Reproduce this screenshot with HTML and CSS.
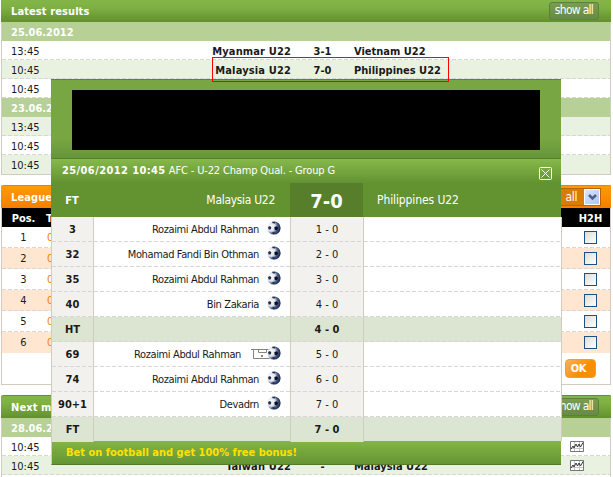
FILE: index.html
```
<!DOCTYPE html>
<html lang="en">
<head>
    <meta charset="UTF-8">
    <title>Latest results</title>
    <link rel="stylesheet" href="styles.css">
</head>
<body>
    <svg width="0" height="0" class="defs">
        <defs>
            <radialGradient id="ballFill" cx="0.25" cy="0.4" r="0.75">
                <stop offset="0" stop-color="#ffffff"/>
                <stop offset="0.45" stop-color="#dfe2ea"/>
                <stop offset="0.7" stop-color="#4a5f8e"/>
                <stop offset="1" stop-color="#14254b"/>
            </radialGradient>
            <symbol id="ball" viewBox="0 0 14 14">
                <circle cx="7" cy="7" r="6.6" fill="url(#ballFill)"/>
                <path d="M1 6l2-1 1.400 1.400-.8 2H1.600z" fill="#26304a"/>
                <path d="M7.400 6l2.400-.8 1.400 1.800-1.200 2.200-2.400-.4z" fill="#0d1220"/>
                <path d="M5 .8L8.600 .7 7.800 2.400 5.600 2.300zM4.600 11.800l2.200-.8 1.600 1.200-1.400 1.200z" fill="#26304a"/>
            </symbol>
            <symbol id="goal" viewBox="0 0 20 11">
                <path d="M0 .5h20M2.500 .5v9h16M7.500 .5v3h8v-3" fill="none" stroke="#85857f"/>
                <path d="M10 6h2v2h-2z" fill="#85857f"/>
            </symbol>
            <symbol id="chart" viewBox="0 0 14 11">
                <path d="M.5 .5h13v10H.5zM4.500 1v9M9.500 1v9M1 7.500h12" fill="#fff" stroke="#c4c4c4"/>
                <path d="M.5 .5h13v10H.5z" fill="none" stroke="#77777a"/>
                <path d="M1 8l2-3 1 2 2-4 1.500 3L9 3l1.500 3L13 1.500" fill="none" stroke="#333"/>
            </symbol>
        </defs>
    </svg>

    <div class="page">
        <div class="panel results">
            <div class="panel-head">Latest results<a class="show-all">show all</a></div>
            <div class="date">25.06.2012</div>
            <div class="match"><span>13:45</span><b class="home">Myanmar U22</b><b class="score">3-1</b><b>Vietnam U22</b></div>
            <div class="match alt marked"><span>10:45</span><b class="home">Malaysia U22</b><b class="score">7-0</b><b>Philippines U22</b></div>
            <div class="match"><span>10:45</span></div>
            <div class="date">23.06.2012</div>
            <div class="match alt"><span>13:45</span></div>
            <div class="match"><span>10:45</span></div>
            <div class="match alt last"><span>10:45</span></div>
        </div>

        <div class="panel league">
            <div class="panel-head">League<span class="select">all<i><svg width="9" height="7" viewBox="0 0 9 7"><path d="M1 1l3.500 3.500L8 1" fill="none" stroke="#4d6185" stroke-width="2.600"/></svg></i></span></div>
            <div class="league-row league-title"><span>Pos.</span><span>T</span><span class="h2h">H2H</span></div>
            <div class="league-row"><span>1</span><a>0</a><i class="check"></i></div>
            <div class="league-row peach"><span>2</span><a>0</a><i class="check"></i></div>
            <div class="league-row"><span>3</span><a>0</a><i class="check"></i></div>
            <div class="league-row peach"><span>4</span><a>0</a><i class="check"></i></div>
            <div class="league-row"><span>5</span><a>0</a><i class="check"></i></div>
            <div class="league-row peach last"><span>6</span><a>0</a><i class="check"></i></div>
            <div class="league-foot"><button class="ok">OK</button></div>
        </div>

        <div class="panel next">
            <div class="panel-head">Next matches<a class="show-all">show all</a></div>
            <div class="date">28.06.2012</div>
            <div class="match"><span>10:45</span><svg class="chart"><use href="#chart"/></svg></div>
            <div class="match alt"><span>10:45</span><b class="home">Taiwan U22</b><b class="score">-</b><b>Malaysia U22</b><svg class="chart"><use href="#chart"/></svg></div>
            <div class="match"></div>
        </div>
    </div>

    <div class="popup">
        <div class="banner"><div class="ad"></div></div>
        <div class="popup-head">
            <div><b>25/06/2012 10:45</b> <span>AFC - U-22 Champ Qual. - Group G</span></div>
            <svg class="close" width="13" height="13" viewBox="0 0 13 13"><rect x=".5" y=".5" width="12" height="12" rx="1" fill="none" stroke="#fff"/><path d="M2.500 2.500l8 8M10.500 2.500l-8 8" stroke="#fff"/></svg>
        </div>
        <div class="teams"><b>FT</b><span class="player">Malaysia U22</span><b class="total">7-0</b><span class="away">Philippines U22</span></div>
        <div class="events">
            <div class="event"><b>3</b><span class="player">Rozaimi Abdul Rahman<svg class="ball"><use href="#ball"/></svg></span><span>1 - 0</span></div>
            <div class="event"><b>32</b><span class="player">Mohamad Fandi Bin Othman<svg class="ball"><use href="#ball"/></svg></span><span>2 - 0</span></div>
            <div class="event"><b>35</b><span class="player">Rozaimi Abdul Rahman<svg class="ball"><use href="#ball"/></svg></span><span>3 - 0</span></div>
            <div class="event"><b>40</b><span class="player">Bin Zakaria<svg class="ball"><use href="#ball"/></svg></span><span>4 - 0</span></div>
            <div class="event half"><b>HT</b><span class="player"></span><b>4 - 0</b></div>
            <div class="event"><b>69</b><span class="player">Rozaimi Abdul Rahman<svg class="goal"><use href="#goal"/></svg><svg class="ball"><use href="#ball"/></svg></span><span>5 - 0</span></div>
            <div class="event"><b>74</b><span class="player">Rozaimi Abdul Rahman<svg class="ball"><use href="#ball"/></svg></span><span>6 - 0</span></div>
            <div class="event"><b>90+1</b><span class="player">Devadrn<svg class="ball"><use href="#ball"/></svg></span><span>7 - 0</span></div>
            <div class="event half"><b>FT</b><span class="player"></span><b>7 - 0</b></div>
        </div>
        <div class="bonus">Bet on football and get 100% free bonus!</div>
    </div>
</body>
</html>
```
FILE: styles.css
```
* {
    box-sizing: border-box;
}

body {
    margin: 0;
    height: 477px;
    overflow: hidden;
    position: relative;
    background: #fff;
    color: #1a1a1a;
    font-family: Tahoma, "DejaVu Sans Condensed", "DejaVu Sans", sans-serif;
    font-stretch: condensed;
    font-size: 11px;
}

.defs {
    position: absolute;
}

.page {
    height: 477px;
    overflow: hidden;
    padding-left: 1px;
    width: 611px;
}

.panel {
    border: 1px solid #d0ccc0;
    border-top: 0;
    margin-bottom: 10px;
}

.panel-head {
    height: 23px;
    margin: 0 -2px 0 -1px;
    padding: 0 0 0 10px;
    border-top: 1px solid #5f922f;
    border-radius: 3px 3px 0 0;
    background: linear-gradient(#83b548, #7eb043 35%, #629030);
    color: #fff;
    font-weight: bold;
    line-height: 23px;
    letter-spacing: 0.1px;
    display: flex;
    justify-content: space-between;
}

.results .panel-head {
    height: 22px;
    border-top: 0;
    border-radius: 0;
}

.show-all {
    width: 50px;
    height: 18px;
    margin: 2px 13px 0 0;
    border: 1px solid #5f8038;
    border-radius: 3px;
    background: linear-gradient(#7a9c55, #668b42);
    font-weight: normal;
    font-size: 12px;
    line-height: 15px;
    letter-spacing: -0.7px;
    text-align: center;
}

.date {
    height: 19px;
    padding-left: 9px;
    background: #b6d095;
    color: #fff;
    font-weight: bold;
    line-height: 21px;
}

.match {
    height: 19px;
    padding-left: 9px;
    line-height: 21px;
    display: grid;
    grid-template-columns: 100px 180px 63px 215px 15px;
    background: repeating-linear-gradient(90deg, #d6d6d6 0 4px, transparent 4px 6px) bottom / 100% 1px no-repeat #fff;
}

.match.alt {
    background-color: #e9f2e1;
}

.match.last {
    background-image: none;
}

.home {
    text-align: right;
    letter-spacing: 0.15px;
}

.score {
    text-align: center;
}

.match.marked {
    position: relative;
}

.marked::after {
    content: "";
    position: absolute;
    left: 210px;
    top: -3px;
    width: 235px;
    height: 23px;
    border: 1px solid #f00;
    z-index: 3;
}

.chart {
    grid-column: 5;
    width: 14px;
    height: 11px;
    margin: 4px 0 0 1px;
}

.league {
    height: 200px;
}

.league .panel-head {
    border-color: #f47c08;
    background: linear-gradient(#ff9a05, #f57f00);
}

.select {
    width: 60px;
    height: 18px;
    margin: 2px 11px 0 0;
    border: 1px solid #b96400;
    background: #d97b04;
    font-weight: normal;
    line-height: 17px;
    letter-spacing: -0.4px;
    font-size: 12px;
    display: flex;
    justify-content: flex-end;
    gap: 7px;
}

.select i {
    width: 16px;
    height: 16px;
    border: 1px solid #fff;
    background: linear-gradient(135deg, #dbe5fd, #aec4f4);
    display: flex;
    align-items: center;
    justify-content: center;
}

.league-row {
    height: 21px;
    line-height: 22px;
    display: grid;
    grid-template-columns: 43px 528px 37px;
    text-align: center;
    background: repeating-linear-gradient(90deg, #d6d6d6 0 4px, transparent 4px 6px) bottom / 100% 1px no-repeat #fff;
}

.league-row a,
.league-title span:nth-child(2) {
    text-align: left;
    padding-left: 2px;
    color: #f57f00;
}

.league-row.peach {
    background-color: #ffe6d1;
}

.league-row.last {
    background-image: none;
}

.league-row.league-title {
    height: 19px;
    line-height: 21px;
    background: #000;
    color: #fff;
    font-weight: bold;
}

.league-title span:nth-child(2) {
    color: #fff;
    padding-left: 1px;
}

.h2h {
    margin-left: -2px;
}

.check {
    width: 13px;
    height: 13px;
    margin: 4px 0 0 11px;
    border: 1px solid #1d5280;
    background: linear-gradient(135deg, #dcdcd7, #fff);
}

.league-foot {
    padding: 6px 14px 0 0;
    text-align: right;
}

.ok {
    width: 31px;
    height: 19px;
    padding: 0 4px 0 0;
    border: 1px solid #f99b2b;
    border-radius: 4px;
    background: linear-gradient(135deg, #fcb05c, #f98d03 60%);
    color: #fff;
    font: bold 11px "DejaVu Sans Condensed", "DejaVu Sans", sans-serif;
    font-stretch: condensed;
    letter-spacing: -0.4px;
    display: block;
    margin-left: auto;
}

.popup {
    position: absolute;
    left: 51px;
    top: 79px;
    width: 511px;
    height: 386px;
}

.banner {
    width: 510px;
    height: 79px;
    padding: 10px 21px 0;
    border-top: 1px solid #5c8232;
    background: linear-gradient(#78a642 75%, #66953a);
}

.ad {
    width: 468px;
    height: 60px;
    background: #000;
}

.popup-head {
    width: 510px;
    height: 25px;
    padding: 0 9px 0 11px;
    border-top: 1px solid #557f2b;
    background: linear-gradient(#86b84c, #639331);
    color: #fff;
    line-height: 23px;
    display: flex;
    justify-content: space-between;
}

.popup-head b {
    letter-spacing: 0.4px;
}

.popup-head span {
    letter-spacing: -0.15px;
}

.close {
    margin-top: 8px;
}

.teams {
    width: 510px;
    height: 34px;
    background: #639331;
    color: #fff;
    line-height: 35px;
    display: grid;
    grid-template-columns: 42px 197px 73px 198px;
    text-align: center;
}

.teams .player {
    padding-right: 15px;
    font-size: 12px;
    letter-spacing: -0.3px;
}

.teams .away {
    padding-left: 14px;
    font-size: 12px;
    letter-spacing: -0.1px;
    text-align: left;
}

.total {
    background: #577f2b;
    font: bold 20px/36px "DejaVu Sans Condensed", "DejaVu Sans", sans-serif;
    font-stretch: condensed;
}

.events {
    border: solid #d0ccc0;
    border-width: 0 1px;
}

.event {
    height: 25px;
    line-height: 25px;
    text-align: center;
    display: grid;
    grid-template-columns: 42px 197px 73px 197px;
    background: repeating-linear-gradient(90deg, #d6d6d6 0 4px, transparent 4px 6px) bottom / 100% 1px no-repeat #fff;
}

.event > * {
    border-right: 1px solid #d0ccc0;
}

.event > :nth-child(odd) {
    background: repeating-linear-gradient(90deg, #d6d6d6 0 4px, transparent 4px 6px) bottom / 100% 1px no-repeat #f3f1ee;
}

.event.half,
.event.half > :nth-child(odd) {
    background-color: #dce5d2;
}

.event:last-child {
    height: 24px;
}

.event:last-child,
.event:last-child > :nth-child(odd) {
    background-image: none;
}

.player {
    display: flex;
    justify-content: flex-end;
    padding-right: 9px;
    letter-spacing: -0.37px;
}

.ball {
    width: 14px;
    height: 14px;
    margin: 4px 0 0 8px;
}

.goal {
    width: 20px;
    height: 11px;
    margin: 7px -12px 0 10px;
}

.bonus {
    width: 510px;
    height: 24px;
    padding-left: 14px;
    border-left: 1px solid #d0ccc0;
    border-bottom: 1px solid #527a28;
    background: linear-gradient(#83b548, #659532);
    color: #ffe000;
    font-weight: bold;
    line-height: 24px;
}
```
